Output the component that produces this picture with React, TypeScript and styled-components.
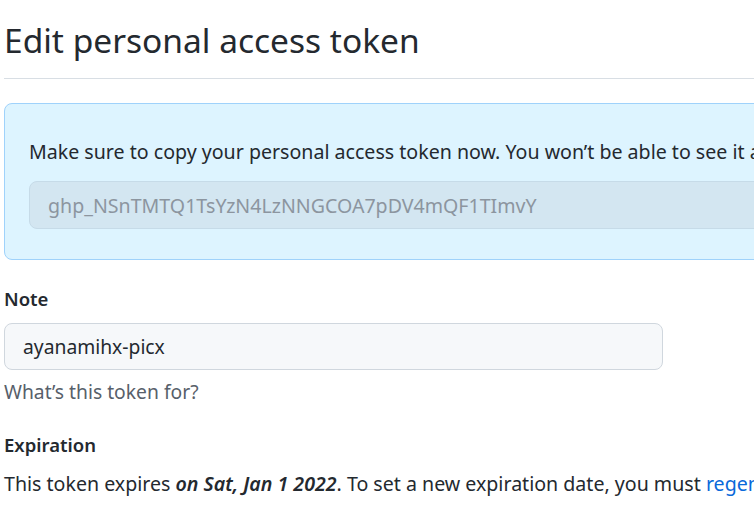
import styled, {createGlobalStyle} from "styled-components";

const GlobalStyle = createGlobalStyle`
  html, body {
    margin: 0;
    padding: 0;
    background: #ffffff;
    overflow: hidden;
  }
  body {
    font-family: "Noto Sans", "Liberation Sans", sans-serif;
    color: #24292f;
  }
`;

const App = () => {
    return (
        <Page>
            <GlobalStyle/>
            <Subhead>
                <Heading>Edit personal access token</Heading>
            </Subhead>

            <Flash>
                <FlashText>
                    Make sure to copy your personal access token now. You won’t be able to see it again!
                </FlashText>
                <TokenField>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</TokenField>
            </Flash>

            <FormGroup space={25}>
                <Label>Note</Label>
                <NoteInput>ayanamihx-picx</NoteInput>
                <Hint>What’s this token for?</Hint>
            </FormGroup>

            <FormGroup space={24}>
                <Label>Expiration</Label>
                <Paragraph>
                    This token expires <Strong>on Sat, Jan 1 2022</Strong>. To set a new expiration date, you must{' '}
                    <Link href="#">regenerate the token</Link>.
                </Paragraph>
            </FormGroup>
        </Page>
    )
}
export default App

const Page = styled.div`
  width: 754px;
  overflow: hidden;
  padding: 0 0 0 4px;
  box-sizing: border-box;
`;

const Subhead = styled.div`
  width: 1000px;
  border-bottom: 1px solid #d8dee4;
  padding: 14px 0 11px;
  margin-bottom: 24px;
`;

const Heading = styled.h1`
  margin: 0;
  font-size: 33.5px;
  font-weight: 400;
  line-height: 53px;
  color: #24292f;
`;

const Flash = styled.div`
  width: 1000px;
  box-sizing: border-box;
  height: 157px;
  padding: 34px 24px 0;
  background: #ddf4ff;
  border: 1px solid #9fd2fb;
  border-radius: 8px;
`;

const FlashText = styled.p`
  margin: 0 0 15px;
  font-size: 19.6px;
  line-height: 28px;
  white-space: nowrap;
`;

const TokenField = styled.div`
  box-sizing: border-box;
  width: 950px;
  height: 48px;
  padding: 0 18px;
  display: flex;
  align-items: center;
  font-size: 19.6px;
  color: #8c959f;
  background: #d3e6f1;
  border: 1px solid #c6dbe8;
  border-radius: 8px;
`;

const FormGroup = styled.div<{ space: number }>`
  margin-top: ${p => p.space + 'px'};
`;

const Label = styled.div`
  font-size: 18.5px;
  font-weight: 600;
  line-height: 28px;
  margin-bottom: 10px;
`;

const NoteInput = styled.div`
  box-sizing: border-box;
  width: 659px;
  height: 47px;
  padding: 0 18px;
  display: flex;
  align-items: center;
  font-size: 19.3px;
  background: #f6f8fa;
  border: 1px solid #d0d7de;
  border-radius: 8px;
`;

const Hint = styled.div`
  margin-top: 7px;
  font-size: 19.3px;
  line-height: 30px;
  color: #57606a;
`;

const Paragraph = styled.p`
  margin: 9px 0 0;
  font-size: 19.6px;
  line-height: 30px;
  white-space: nowrap;
`;

const Strong = styled.strong`
  font-style: italic;
  font-weight: 600;
`;

const Link = styled.a`
  color: #0969da;
  text-decoration: none;
`;
